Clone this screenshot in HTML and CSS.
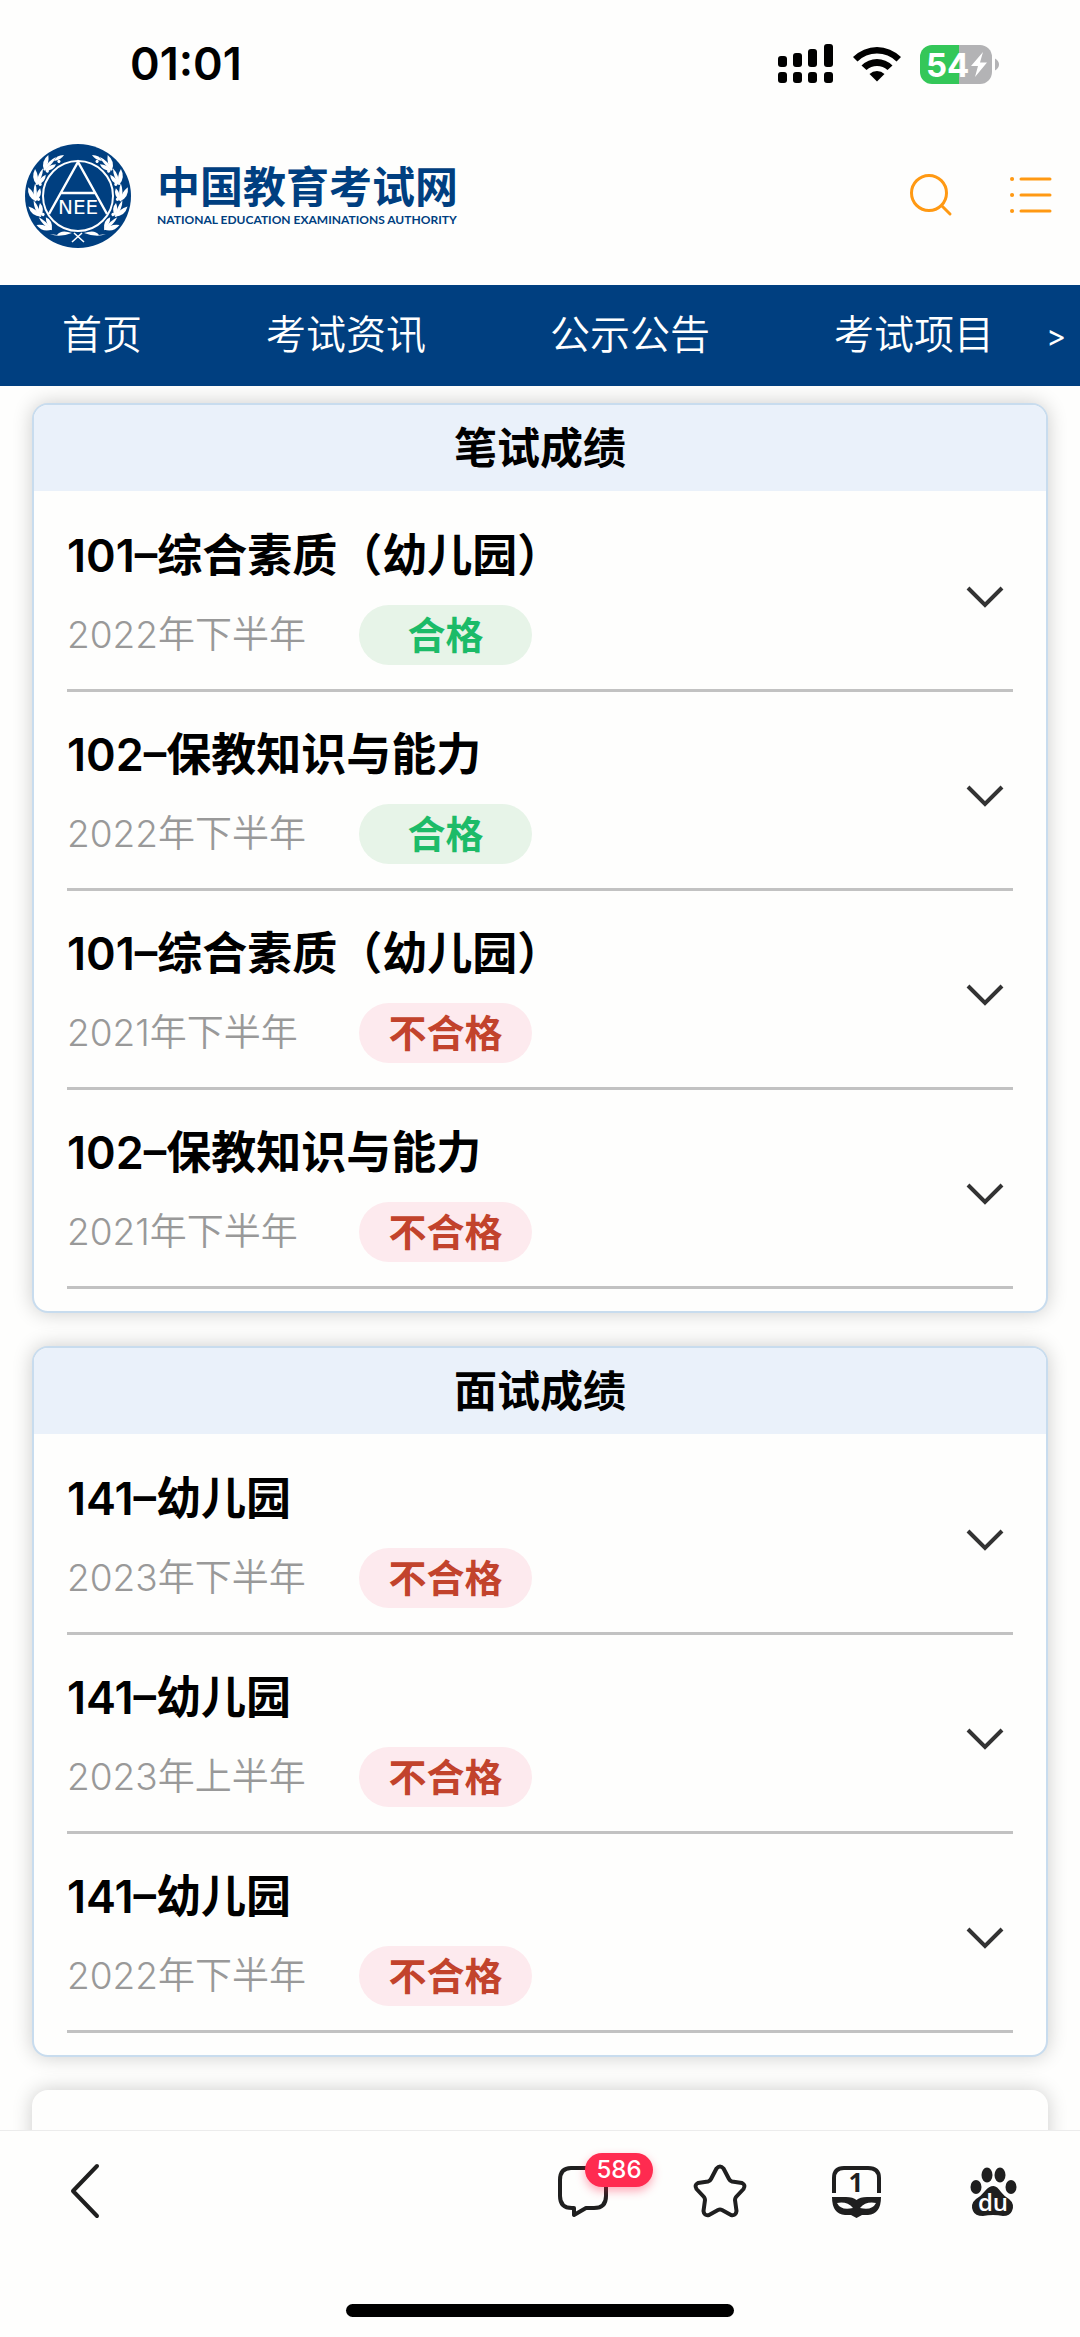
FILE: index.html
```html
<!DOCTYPE html>
<html lang="zh-CN">
  <head>
    <meta charset="UTF-8" />
    <meta name="viewport" content="width=device-width, initial-scale=1.0" />
    <title>中国教育考试网</title>
    <link rel="stylesheet" href="styles.css">
  </head>
  <body>
    <div class="status-bar">
      <span class="time">01:01</span>
      <div class="status-icons">
        <svg class="signal" width="56" height="40" viewBox="0 0 56 40">
          <rect x="0" y="12" width="9" height="11" rx="3" />
          <rect x="15" y="9" width="9" height="14" rx="3" />
          <rect x="30" y="5" width="9" height="18" rx="3" />
          <rect x="46" y="0" width="9" height="23" rx="3" />
          <rect x="0" y="28" width="9" height="11" rx="3" />
          <rect x="15" y="28" width="9" height="11" rx="3" />
          <rect x="30" y="28" width="9" height="11" rx="3" />
          <rect x="46" y="28" width="9" height="11" rx="3" />
        </svg>
        <svg class="wifi" width="48" height="38" viewBox="0 0 48 38">
          <path d="M0 12 A34 34 0 0 1 48 12 L43.500 16.500 A27.500 27.500 0 0 0 4.500 16.500 Z" />
          <path d="M8.500 20.500 A22 22 0 0 1 39.500 20.500 L34.500 25 A15.500 15.500 0 0 0 13.500 25 Z" />
          <path d="M16.500 29 A11 11 0 0 1 31.500 29 L24 36.500 Z" />
        </svg>
        <svg class="battery" width="80" height="39" viewBox="0 0 80 39">
          <path d="M39 0 H60 A12 12 0 0 1 72 12 V27 A12 12 0 0 1 60 39 H39 Z" fill="#b3b3b5" />
          <path d="M39 0 H12 A12 12 0 0 0 0 12 V27 A12 12 0 0 0 12 39 H39 Z" fill="#34c759" />
          <path d="M75 13.500 Q79 16 79 19.500 Q79 23 75 25.500 Z" fill="#b3b3b5" />
          <text x="6" y="32" class="battery-text">54</text>
          <path d="M63 7 L51 21 H58 L55 32 L67 17.500 H60 Z" fill="#fff" />
        </svg>
      </div>
    </div>

    <header>
      <a href="#" class="logo">
        <svg width="106" height="104" viewBox="0 0 106 104">
          <defs>
            <g id="leaf">
              <path d="M11 58 Q2 54 3 44 Q10 49 11 58 Z" />
              <path d="M11 58 Q10 50 15 45 Q18 52 11 58 Z" />
              <path d="M10 58 Q7 48 10 40 Q13 48 11 58 Z" />
              <circle cx="15" cy="41" r="1.600" />
            </g>
            <g id="branch" fill="#fff">
              <use href="#leaf" transform="rotate(-44 53 52)" />
              <use href="#leaf" transform="rotate(-21 53 52)" />
              <use href="#leaf" transform="rotate(1 53 52)" />
              <use href="#leaf" transform="rotate(23 53 52)" />
              <use href="#leaf" transform="rotate(45 53 52)" />
              <path d="M29 17 Q31 11 39 11 Q36 16 29 17 Z" />
              <path d="M25 90 Q34 94 47 89 Q36 85 32 91 Z" />
            </g>
          </defs>
          <ellipse cx="53" cy="52" rx="53" ry="52" fill="#003f80" />
          <use href="#branch" />
          <use href="#branch" transform="matrix(-1 0 0 1 106 0)" />
          <circle cx="53" cy="52" r="35" fill="#003f80" stroke="#fff" stroke-width="2" />
          <path d="M24 70 L53 18 L82 70 M36 49 H70" fill="none" stroke="#fff" stroke-width="2.400" />
          <path d="M47 98 L57 89 M59 98 L49 89" stroke="#fff" stroke-width="1.600" />
          <text x="33" y="70" class="emblem-text">NEE</text>
        </svg>
        <span class="logo-text">
          <strong>中国教育考试网</strong>
          <small>NATIONAL EDUCATION EXAMINATIONS AUTHORITY</small>
        </span>
      </a>
      <div class="header-buttons">
        <button aria-label="搜索">
          <svg width="42" height="42" viewBox="0 0 42 42" fill="none" stroke="#ff9913" stroke-width="3" stroke-linecap="round">
            <circle cx="19" cy="18" r="17.500" />
            <path d="M32 31 L40 39" />
          </svg>
        </button>
        <button aria-label="菜单">
          <svg width="42" height="42" viewBox="0 0 42 42" fill="none" stroke="#ff9913" stroke-width="3" stroke-linecap="round">
            <path d="M11 4 H40 M11 20 H40 M11 36 H40" />
            <path d="M2 4 H2.100 M2 20 H2.100 M2 36 H2.100" stroke-width="4" />
          </svg>
        </button>
      </div>
    </header>

    <nav>
      <ul>
        <li><a href="#">首页</a></li>
        <li><a href="#">考试资讯</a></li>
        <li><a href="#">公示公告</a></li>
        <li><a href="#">考试项目</a></li>
      </ul>
      <button class="nav-more" aria-label="更多">&gt;</button>
    </nav>

    <main>
      <section class="card">
        <h2>笔试成绩</h2>
        <ul>
          <li>
            <div>
              <h3>101–综合素质（幼儿园）</h3>
              <p><span class="date">2022年下半年</span><span class="result pass">合格</span></p>
            </div>
            <button class="expand" aria-label="展开"><svg width="38" height="24" viewBox="0 0 38 24"><path d="M2 3 L19 20 L36 3" /></svg></button>
          </li>
          <li>
            <div>
              <h3>102–保教知识与能力</h3>
              <p><span class="date">2022年下半年</span><span class="result pass">合格</span></p>
            </div>
            <button class="expand" aria-label="展开"><svg width="38" height="24" viewBox="0 0 38 24"><path d="M2 3 L19 20 L36 3" /></svg></button>
          </li>
          <li>
            <div>
              <h3>101–综合素质（幼儿园）</h3>
              <p><span class="date">2021年下半年</span><span class="result fail">不合格</span></p>
            </div>
            <button class="expand" aria-label="展开"><svg width="38" height="24" viewBox="0 0 38 24"><path d="M2 3 L19 20 L36 3" /></svg></button>
          </li>
          <li>
            <div>
              <h3>102–保教知识与能力</h3>
              <p><span class="date">2021年下半年</span><span class="result fail">不合格</span></p>
            </div>
            <button class="expand" aria-label="展开"><svg width="38" height="24" viewBox="0 0 38 24"><path d="M2 3 L19 20 L36 3" /></svg></button>
          </li>
        </ul>
      </section>

      <section class="card">
        <h2>面试成绩</h2>
        <ul>
          <li>
            <div>
              <h3>141–幼儿园</h3>
              <p><span class="date">2023年下半年</span><span class="result fail">不合格</span></p>
            </div>
            <button class="expand" aria-label="展开"><svg width="38" height="24" viewBox="0 0 38 24"><path d="M2 3 L19 20 L36 3" /></svg></button>
          </li>
          <li>
            <div>
              <h3>141–幼儿园</h3>
              <p><span class="date">2023年上半年</span><span class="result fail">不合格</span></p>
            </div>
            <button class="expand" aria-label="展开"><svg width="38" height="24" viewBox="0 0 38 24"><path d="M2 3 L19 20 L36 3" /></svg></button>
          </li>
          <li>
            <div>
              <h3>141–幼儿园</h3>
              <p><span class="date">2022年下半年</span><span class="result fail">不合格</span></p>
            </div>
            <button class="expand" aria-label="展开"><svg width="38" height="24" viewBox="0 0 38 24"><path d="M2 3 L19 20 L36 3" /></svg></button>
          </li>
        </ul>
      </section>

      <section class="card card-empty"></section>
    </main>

    <footer>
      <div class="toolbar">
        <button aria-label="返回">
          <svg width="52" height="52" viewBox="0 0 52 52" class="line"><path d="M37 1 L13 26 L37 51" /></svg>
        </button>
        <div class="toolbar-right">
          <button aria-label="评论">
            <svg width="52" height="52" viewBox="0 0 52 52" class="line">
              <path d="M14 3 H37 Q49 3 49 15 V31 Q49 43 37 43 H29 L17 50 V43 H15 Q3 43 3 31 V15 Q3 3 14 3 Z" />
            </svg>
            <span class="count">586</span>
          </button>
          <button aria-label="收藏">
            <svg width="52" height="52" viewBox="0 0 52 52" class="line">
              <path d="M22.500 3.500 Q26 -0.500 29.500 3.500 L35 14 Q36 16 38 16.500 L48 18 Q52 20 49.500 24 L42 32 Q41 33.500 41 35 L42.500 46 Q42 51 37 50 L28 45 Q26 44 24 45 L15 50 Q10 51 9.500 46 L11 35 Q11 33.500 10 32 L2.500 24 Q0 20 4 18 L14 16.500 Q16 16 17 14 Z" />
            </svg>
          </button>
          <button aria-label="窗口">
            <svg width="52" height="52" viewBox="0 0 52 52">
              <path d="M3 28 V13 Q3 3 13 3 H37 Q48 3 48 13 V28" fill="none" stroke="#1f1f1f" stroke-width="4" />
              <path fill="#1f1f1f" fill-rule="evenodd" d="M1 32 H15 Q22 32 25.500 35 Q29 32 36 32 H50 Q50 49 37 50 H31 L25.500 53 L20 50 H14 Q1 49 1 32 Z M6 38 Q10 46 22 43 Q16 36 6 38 Z M45 38 Q41 46 29 43 Q35 36 45 38 Z" />
              <text x="25" y="27" class="tab-text">1</text>
            </svg>
          </button>
          <button aria-label="百度">
            <svg width="52" height="52" viewBox="0 0 52 52" fill="#1f1f1f">
              <ellipse cx="8" cy="22" rx="5.500" ry="7" />
              <ellipse cx="19" cy="10" rx="5.500" ry="7.500" />
              <ellipse cx="32" cy="10" rx="5.500" ry="7.500" />
              <ellipse cx="43" cy="22" rx="5.500" ry="7" />
              <path d="M25.500 21 Q29 21 33 27 Q36 31 41 34 Q47 39 44 46 Q42 51 35 51 Q25 49 15 51 Q7 51 5 46 Q2 39 8 34 Q13 31 17 26 Q21 21 25.500 21 Z" />
              <text x="25" y="46" class="paw-text">du</text>
            </svg>
          </button>
        </div>
      </div>
      <div class="home-indicator"></div>
    </footer>
  </body>
</html>
```

FILE: styles.css
```css
* {
  box-sizing: border-box;
  margin: 0;
  padding: 0;
}
body {
  height: 100vh;
  display: flex;
  flex-direction: column;
  background-color: #fefefd;
  color: black;
  font-family: Inter, "Noto Sans CJK SC", sans-serif;
}
ul {
  list-style-type: none;
}
a {
  text-decoration: none;
  color: inherit;
}
button {
  border: none;
  background: none;
  color: inherit;
  font-family: inherit;
  cursor: pointer;
}
svg {
  display: block;
  overflow: visible;
}

/* phone status bar */
.status-bar {
  display: flex;
  justify-content: space-between;
  align-items: center;
  padding: 34px 80px 32px 130px;
}
.time {
  font-size: 45px;
  line-height: 60px;
  font-weight: 600;
}
.status-icons {
  display: flex;
  align-items: center;
  gap: 19px;
}
.battery-text {
  font-size: 33px;
  font-weight: 700;
  fill: white;
}

header {
  display: flex;
  justify-content: space-between;
  align-items: center;
  padding: 18px 28px 37px 25px;
}
.logo {
  display: flex;
  align-items: center;
  gap: 26px;
  color: #003f80;
}
.emblem-text {
  font-family: "DejaVu Sans", sans-serif;
  font-size: 20px;
  fill: white;
}
.logo-text strong {
  display: block;
  font-size: 43px;
  line-height: 48px;
  font-weight: 700;
}
.logo-text small {
  display: block;
  font-family: Lato, sans-serif;
  font-size: 12px;
  line-height: 18px;
  font-weight: 700;
}
.header-buttons {
  display: flex;
  gap: 58px;
}

nav {
  display: flex;
  justify-content: space-between;
  align-items: center;
  padding: 0 14px 0 62px;
  background-color: #003f80;
  color: white;
}
nav ul {
  display: flex;
  gap: 124px;
}
nav a {
  display: block;
  font-size: 40px;
  line-height: 100px;
  padding-bottom: 1px;
  font-weight: 350;
  white-space: nowrap;
}
.nav-more {
  font-size: 30px;
  font-weight: 400;
}

main {
  flex: 1;
  min-height: 0;
  overflow: hidden;
  display: flex;
  flex-direction: column;
  gap: 33px;
  padding: 17px 32px 0;
}
.card {
  flex-shrink: 0;
  border: 2px solid #c8dcee;
  border-radius: 16px;
  box-shadow: 0 0 20px rgba(0, 0, 0, 0.2);
  background-color: #fefefd;
  overflow: hidden;
}
.card h2 {
  background-color: #eaf1fa;
  text-align: center;
  font-size: 43px;
  line-height: 86px;
  font-weight: 600;
}
.card ul {
  padding: 2px 33px 22px;
}
.card li {
  display: flex;
  justify-content: space-between;
  align-items: center;
  padding: 36px 9px 24px 0;
  border-bottom: 3px solid #c2c2c2;
}
.card h3 {
  font-size: 45px;
  line-height: 54px;
  font-weight: 600;
  margin-bottom: 22px;
}
.card p {
  display: flex;
  align-items: center;
  font-size: 38px;
  line-height: 60px;
}
.date {
  width: 292px;
  color: #999;
  font-size: 37px;
  font-weight: 350;
}
.result {
  width: 173px;
  border-radius: 30px;
  text-align: center;
  font-weight: 600;
}
.pass {
  background-color: #e7f4e8;
  color: #1cbb68;
}
.fail {
  background-color: #fdeaee;
  color: #c2432c;
}
.expand path {
  fill: none;
  stroke: #333;
  stroke-width: 4;
}
.card-empty {
  min-height: 200px;
  border: none;
}

footer {
  position: relative;
  background-color: #fefefd;
  border-top: 1px solid #ececec;
  padding-bottom: 20px;
}
.toolbar {
  display: flex;
  justify-content: space-between;
  padding: 34px 60px 87px;
}
.toolbar-right {
  display: flex;
  gap: 85px;
}
.toolbar button {
  position: relative;
}
.line {
  fill: none;
  stroke: #1f1f1f;
  stroke-width: 4;
  stroke-linecap: round;
  stroke-linejoin: round;
}
.count {
  position: absolute;
  top: -12px;
  left: 28px;
  width: 68px;
  border-radius: 17px;
  background-color: #ff2b50;
  box-shadow: 0 4px 10px rgba(255, 43, 80, 0.4);
  color: white;
  font-size: 24px;
  line-height: 34px;
  font-weight: 500;
}
.tab-text {
  font-family: "Open Sans", sans-serif;
  font-size: 26px;
  font-weight: 700;
  text-anchor: middle;
  fill: #1f1f1f;
}
.paw-text {
  font-family: "Open Sans", sans-serif;
  font-size: 24px;
  font-weight: 600;
  text-anchor: middle;
  fill: white;
}
.home-indicator {
  width: 36%;
  height: 13px;
  margin: 0 auto;
  border-radius: 7px;
  background-color: black;
}
```
